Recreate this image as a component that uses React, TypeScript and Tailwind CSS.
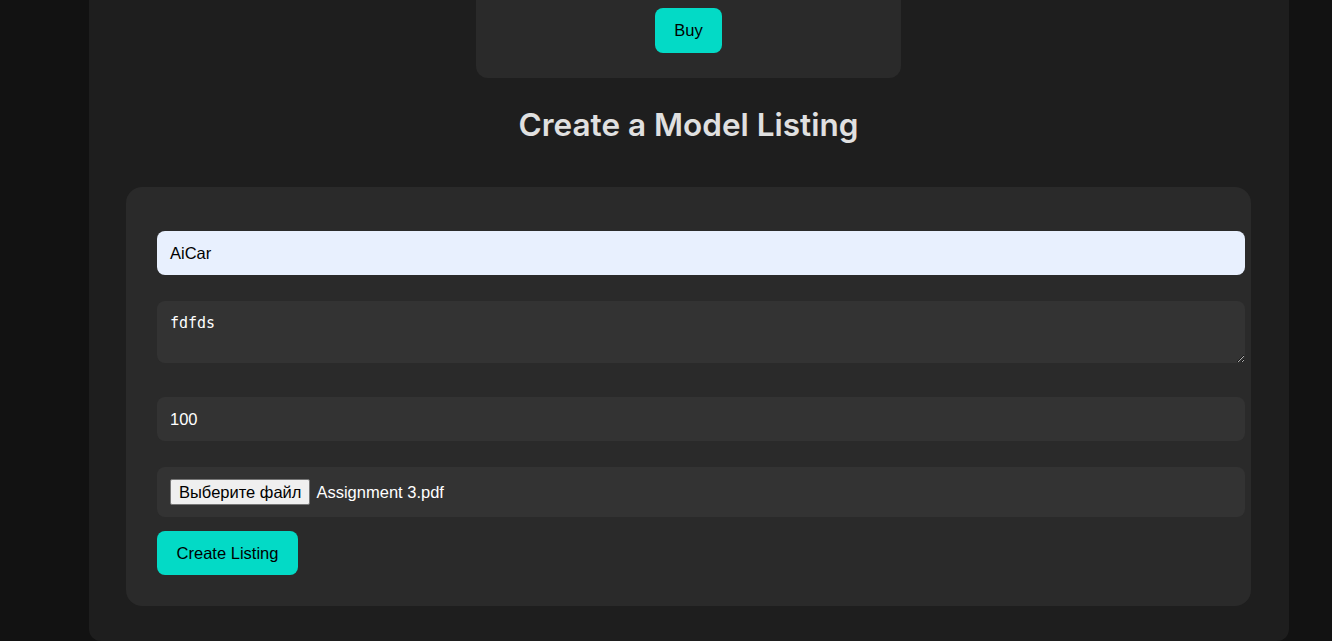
export default function App() {
  return (
    <div className="min-h-[641px] bg-[#121212] font-['Liberation_Sans',Arial,sans-serif]">
      <div className="ml-[89px] w-[1200px] h-[641px] rounded-b-xl bg-[#1e1e1e] pl-[37px] pr-[38px]">
        {/* tail of the model card above */}
        <div className="mx-auto flex w-[425px] justify-center rounded-b-xl bg-[#2a2a2a] pt-2 pb-[25px]">
          <button className="h-[45px] w-[67px] rounded-lg bg-[#03dac6] text-[16.5px] text-black">Buy</button>
        </div>

        <h2 className="mt-[23px] mb-[38px] text-center font-['Inter',sans-serif] text-[31.5px] leading-[48px] font-semibold text-[#e0e0e0]">
          Create a Model Listing
        </h2>

        <form className="rounded-2xl bg-[#2a2a2a] pt-[44px] pb-[31px] pl-[31px] pr-[6px]">
          <div className="flex h-[44px] items-center rounded-lg bg-[#e8f0fe] px-[13px] text-[16.5px] text-black">AiCar</div>

          <textarea
            className="mt-[26px] block h-[62px] w-full rounded-lg bg-[#333333] px-[13px] pt-[11px] font-['DejaVu_Sans_Mono',monospace] text-[15px] text-white outline-none"
            defaultValue="fdfds"
          />

          <div className="mt-[34px] flex h-[44px] items-center rounded-lg bg-[#333333] px-[13px] text-[16.5px] text-white">100</div>

          <div className="mt-[26px] flex h-[50px] items-center gap-[6px] rounded-lg bg-[#333333] px-[13px] text-[16.5px] text-white">
            <span className="flex h-[26px] items-center rounded-[2px] border border-[#767676] bg-[#efefef] px-[8px] text-black">
              Выберите файл
            </span>
            <span>Assignment 3.pdf</span>
          </div>

          <button
            type="button"
            className="mt-[14px] h-[44px] w-[141px] rounded-lg bg-[#03dac6] text-[16.5px] text-black"
          >
            Create Listing
          </button>
        </form>
      </div>
    </div>
  );
}
